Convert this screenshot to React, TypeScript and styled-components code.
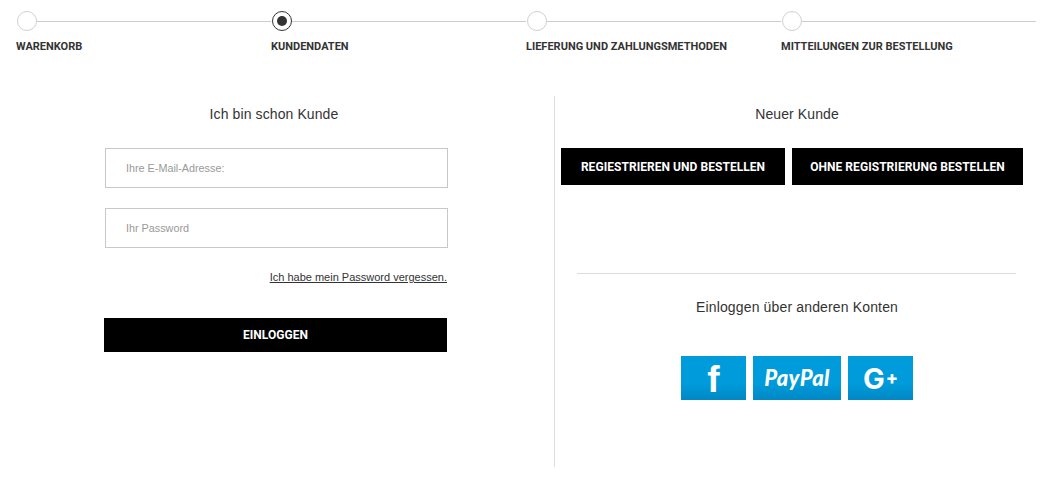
import styled, { createGlobalStyle } from "styled-components";

const GlobalStyle = createGlobalStyle`
  html, body {
    margin: 0;
    background: #fff;
    color: #333;
    font-family: "Liberation Sans", Arial, sans-serif;
  }
  * {
    box-sizing: border-box;
  }
`;

const Page = styled.div`
  width: 1043px;
  height: 479px;
  overflow: hidden;
`;

const Stepper = styled.ol`
  display: grid;
  grid-template-columns: repeat(4, 255px);
  margin: 0;
  padding: 11px 0 0 16px;
  list-style: none;
`;

const Step = styled.li`
  display: flex;
  flex-direction: column;
`;

const StepTrack = styled.div`
  display: flex;
  align-items: center;
  height: 20px;
`;

const StepCircle = styled.span<{ $active?: boolean }>`
  display: flex;
  align-items: center;
  justify-content: center;
  flex: none;
  width: 20px;
  height: 20px;
  margin-left: 1px;
  border-radius: 50%;
  border: ${(p) => (p.$active ? "1.5px solid #333" : "1.5px solid #d0d0d0")};
  background: #fff;
`;

const StepDot = styled.span`
  width: 10px;
  height: 10px;
  border-radius: 50%;
  background: #333;
`;

const StepLine = styled.span`
  flex: 1;
  height: 1px;
  margin-top: 1px;
  background: #ccc;
`;

const StepLabel = styled.span`
  margin-top: 9px;
  font-family: Roboto, "Liberation Sans", sans-serif;
  font-size: 11px;
  line-height: 13px;
  font-weight: 700;
  color: #333;
  white-space: nowrap;
`;

const Columns = styled.main`
  display: grid;
  grid-template-columns: 554px 1fr;
  height: 371px;
  margin-top: 43px;
`;

const LoginColumn = styled.section`
  display: flex;
  flex-direction: column;
  align-items: flex-start;
  padding: 9px 0 0 104px;
`;

const NewCustomerColumn = styled.section`
  display: flex;
  flex-direction: column;
  align-items: center;
  padding: 9px 10px 0 6px;
  border-left: 1px solid #ddd;
`;

const Title = styled.h2`
  margin: 0;
  height: 18px;
  font-size: 14px;
  line-height: 18px;
  font-weight: 400;
  letter-spacing: 0.1px;
  color: #333;
  text-align: center;
  align-self: stretch;
`;

const LoginTitle = styled(Title)`
  width: 340px;
  align-self: flex-start;
`;

const Input = styled.input`
  display: block;
  width: 343px;
  height: 40px;
  margin: 0 0 20px 1px;
  padding: 0 20px;
  border: 1px solid #c8c8c8;
  border-radius: 0;
  outline: none;
  font-family: inherit;
  font-size: 10.8px;
  color: #333;

  &::placeholder {
    color: #999;
    opacity: 1;
  }
`;

const Form = styled.form`
  display: flex;
  flex-direction: column;
  align-items: flex-start;
  margin-top: 25px;
`;

const ForgotLink = styled.a`
  align-self: flex-end;
  margin: 3px 1px 0 0;
  font-size: 11px;
  line-height: 13px;
  color: #333;
  text-decoration: underline;
  cursor: pointer;
`;

const BlackButton = styled.button`
  display: block;
  border: 0;
  border-radius: 0;
  background: #000;
  color: #fff;
  font-family: Roboto, "Liberation Sans", sans-serif;
  font-size: 12px;
  font-weight: 700;
  letter-spacing: 0.05px;
  white-space: nowrap;
  cursor: pointer;
`;

const LoginButton = styled(BlackButton)`
  width: 343px;
  height: 34px;
  margin-top: 34px;
`;

const ButtonRow = styled.div`
  display: grid;
  grid-template-columns: 224px 231px;
  gap: 7px;
  margin-top: 25px;
  align-self: flex-start;
`;

const ActionButton = styled(BlackButton)`
  height: 37px;
  padding: 0;
`;

const Divider = styled.hr`
  align-self: flex-start;
  width: 439px;
  height: 1px;
  margin: 88px 0 0 16px;
  border: 0;
  background: #ddd;
`;

const SubTitle = styled(Title)`
  margin-top: 24px;
  letter-spacing: 0.15px;
`;

const SocialRow = styled.div`
  display: flex;
  gap: 7px;
  margin-top: 40px;
`;

const SocialButton = styled.a<{ $width: number }>`
  display: flex;
  align-items: center;
  justify-content: center;
  width: ${(p) => p.$width}px;
  height: 44px;
  background: linear-gradient(#009bdb 0%, #009bdb 62%, #0088c4 100%);
  color: #fff;
  text-decoration: none;
  cursor: pointer;
`;

const FacebookMark = styled.span`
  font-family: "Liberation Sans", Arial, sans-serif;
  font-size: 37px;
  font-weight: 700;
  line-height: 1;
  margin-top: 3px;
`;

const PayPalMark = styled.span`
  font-family: Lato, "Liberation Sans", sans-serif;
  font-size: 22px;
  font-style: italic;
  font-weight: 900;
  letter-spacing: 0.3px;
  line-height: 1;
`;

const GoogleMark = styled.span`
  display: flex;
  align-items: center;
  font-family: Inter, "Liberation Sans", sans-serif;
  font-size: 29px;
  font-weight: 700;
  line-height: 1;
`;

const GooglePlus = styled.span`
  font-size: 18px;
  font-weight: 800;
  margin-left: 1px;
`;

const steps = [
  "WARENKORB",
  "KUNDENDATEN",
  "LIEFERUNG UND ZAHLUNGSMETHODEN",
  "MITTEILUNGEN ZUR BESTELLUNG",
];

export default function App() {
  return (
    <Page>
      <GlobalStyle />
      <Stepper>
        {steps.map((label, i) => (
          <Step key={label}>
            <StepTrack>
              <StepCircle $active={i === 1}>{i === 1 && <StepDot />}</StepCircle>
              <StepLine />
            </StepTrack>
            <StepLabel>{label}</StepLabel>
          </Step>
        ))}
      </Stepper>
      <Columns>
        <LoginColumn>
          <LoginTitle>Ich bin schon Kunde</LoginTitle>
          <Form onSubmit={(e) => e.preventDefault()}>
            <Input type="email" placeholder="Ihre E-Mail-Adresse:" />
            <Input type="password" placeholder="Ihr Password" />
            <ForgotLink>Ich habe mein Password vergessen.</ForgotLink>
            <LoginButton type="submit">EINLOGGEN</LoginButton>
          </Form>
        </LoginColumn>
        <NewCustomerColumn>
          <Title>Neuer Kunde</Title>
          <ButtonRow>
            <ActionButton>REGIESTRIEREN UND BESTELLEN</ActionButton>
            <ActionButton>OHNE REGISTRIERUNG BESTELLEN</ActionButton>
          </ButtonRow>
          <Divider />
          <SubTitle>Einloggen über anderen Konten</SubTitle>
          <SocialRow>
            <SocialButton $width={65}>
              <FacebookMark>f</FacebookMark>
            </SocialButton>
            <SocialButton $width={88}>
              <PayPalMark>PayPal</PayPalMark>
            </SocialButton>
            <SocialButton $width={65}>
              <GoogleMark>
                G<GooglePlus>+</GooglePlus>
              </GoogleMark>
            </SocialButton>
          </SocialRow>
        </NewCustomerColumn>
      </Columns>
    </Page>
  );
}
